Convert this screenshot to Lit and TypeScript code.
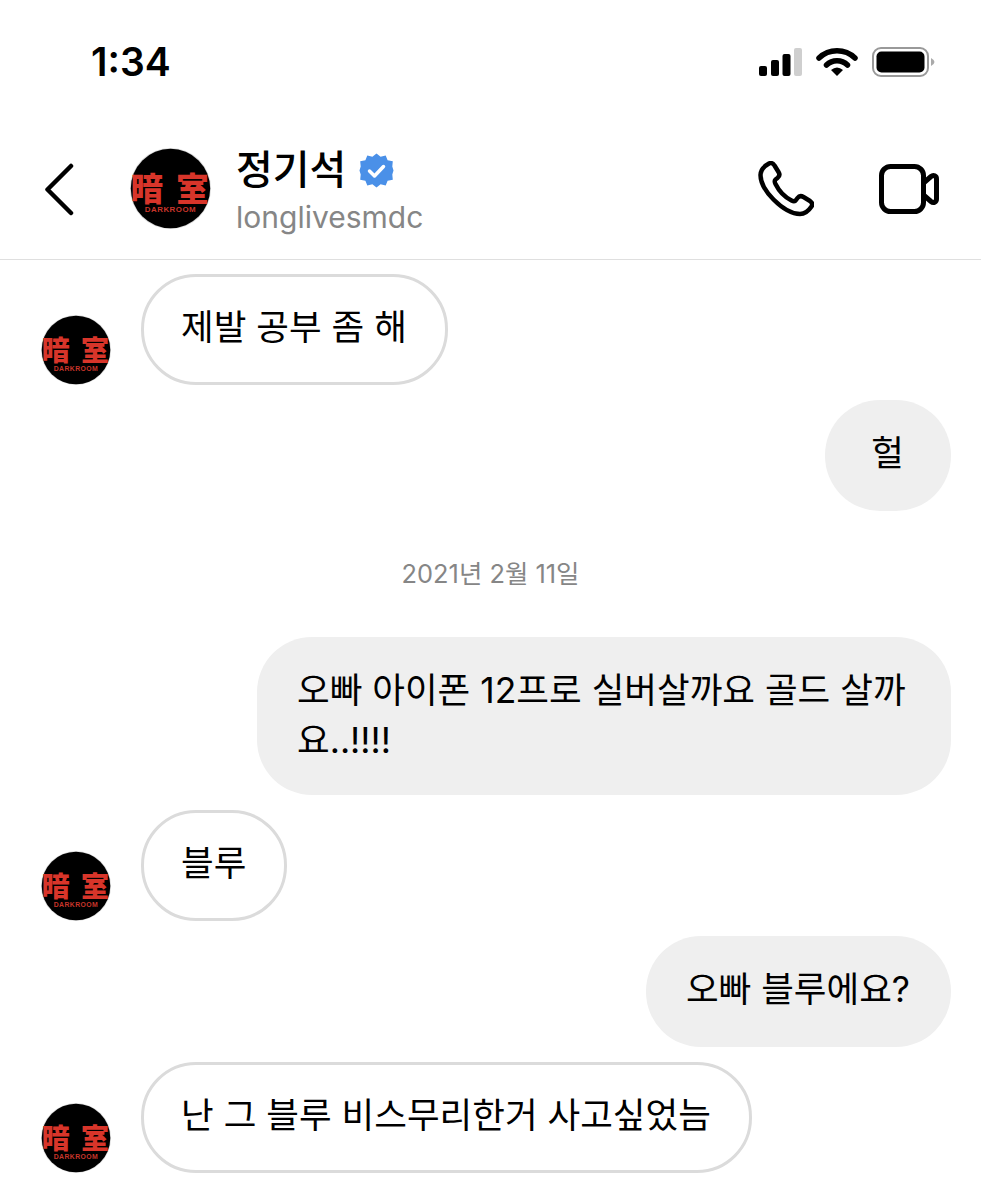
import { LitElement, html, css } from 'lit';
import { customElement, property } from 'lit/decorators.js';

// avatar: black disc with the red "darkroom" mark
@customElement('dm-avatar')
export class DmAvatar extends LitElement {
  @property({ type: Number }) size = 70;

  static styles = css`
    :host {
      display: block;
      flex: none;
    }
    svg {
      display: block;
    }
    .han {
      font-family: "Noto Sans CJK KR", sans-serif;
      font-weight: 900;
      font-size: 40px;
      fill: #d8352a;
    }
    .sub {
      font-family: "Liberation Sans", sans-serif;
      font-weight: 700;
      font-size: 9.8px;
      letter-spacing: 0.6px;
      fill: #c8352a;
    }
  `;

  render() {
    return html`
      <svg width=${this.size} height=${this.size} viewBox="0 0 100 100">
        <circle cx="50" cy="50" r="50" fill="#dbdbdb"></circle>
        <circle cx="50" cy="50" r="49" fill="#000"></circle>
        <text class="han" x="1" y="66">暗</text>
        <text class="han" x="57" y="66">室</text>
        <text class="sub" x="50" y="79.5" text-anchor="middle">DARKROOM</text>
      </svg>
    `;
  }
}

type Msg = { kind: 'in' | 'out' | 'date'; text: string };

const MESSAGES: Msg[] = [
  { kind: 'in', text: '제발 공부 좀 해' },
  { kind: 'out', text: '헐' },
  { kind: 'date', text: '2021년 2월 11일' },
  { kind: 'out', text: '오빠 아이폰 12프로 실버살까요 골드 살까요..!!!!' },
  { kind: 'in', text: '블루' },
  { kind: 'out', text: '오빠 블루에요?' },
  { kind: 'in', text: '난 그 블루 비스무리한거 사고싶었늠' },
];

@customElement('app-root')
export class AppRoot extends LitElement {
  static styles = css`
    :host {
      display: block;
      height: 1200px;
      overflow: hidden;
      background: #fff;
      color: #000;
      font-family: Inter, "Noto Sans CJK KR", sans-serif;
    }

    .status {
      height: 130px;
      box-sizing: border-box;
      padding: 39px 46px 0 91px;
      display: flex;
      justify-content: space-between;
      align-items: flex-start;
    }
    .time {
      font-size: 39px;
      line-height: 46px;
      font-weight: 600;
    }
    .status-icons {
      display: flex;
      align-items: center;
      gap: 14px;
      padding-top: 8px;
    }
    .status-icons svg {
      display: block;
    }

    .header {
      height: 130px;
      box-sizing: border-box;
      border-bottom: 1px solid #dfdfdf;
      display: flex;
      align-items: flex-start;
      padding: 19px 42px 0 43px;
    }
    .back {
      display: block;
      margin: 14px 0 0 0;
      flex: none;
    }
    .header dm-avatar {
      margin: -1px 0 0 55px;
    }
    .who {
      margin-left: 25px;
      flex: 1;
    }
    .name-row {
      display: flex;
      align-items: center;
      gap: 13px;
      height: 42px;
    }
    .name {
      font-size: 40px;
      line-height: 42px;
      font-weight: 500;
    }
    .handle {
      font-size: 30px;
      line-height: 36px;
      margin-top: 8px;
      color: #868686;
    }
    .actions {
      display: flex;
      gap: 65px;
      align-items: center;
      padding-top: 12px;
    }
    .actions svg {
      display: block;
    }

    .thread {
      display: flex;
      flex-direction: column;
      padding: 14px 30px 0 41px;
      gap: 15px;
    }
    .row {
      display: flex;
      align-items: flex-end;
      gap: 30px;
    }
    .row.out {
      justify-content: flex-end;
    }
    .bubble {
      box-sizing: border-box;
      display: flex;
      justify-content: center;
      max-width: 694px;
      min-width: 126px;
      min-height: 111px;
      border-radius: 55px;
      padding: 29px 41px 29px 40px;
      font-size: 35.5px;
      line-height: 50px;
      word-break: break-all;
    }
    .in .bubble {
      border: 3px solid #dbdbdb;
      padding: 26px 38px 26px 37px;
      background: #fff;
    }
    .out .bubble {
      background: #efefef;
    }
    .date {
      height: 96px;
      box-sizing: border-box;
      padding: 32px 11px 0 0;
      text-align: center;
      font-size: 25.4px;
      line-height: 32px;
      color: #868686;
    }
  `;

  renderMessage(m: Msg) {
    if (m.kind === 'date') return html`<div class="date">${m.text}</div>`;
    if (m.kind === 'out') {
      return html`<div class="row out"><div class="bubble">${m.text}</div></div>`;
    }
    return html`
      <div class="row in">
        <dm-avatar size="70"></dm-avatar>
        <div class="bubble">${m.text}</div>
      </div>
    `;
  }

  render() {
    return html`
      <div class="status">
        <div class="time">1:34</div>
        <div class="status-icons">
          <svg width="44" height="30" viewBox="0 0 44 30">
            <rect x="1" y="19" width="8" height="10" rx="2" fill="#000"></rect>
            <rect x="13" y="13" width="8" height="16" rx="2" fill="#000"></rect>
            <rect x="24.5" y="7" width="8" height="22" rx="2" fill="#000"></rect>
            <rect x="36" y="1" width="8" height="28" rx="2" fill="#cfcfcf"></rect>
          </svg>
          <svg width="42" height="30" viewBox="0 0 42 30">
            <path d="M3 11 A26 26 0 0 1 39 11" fill="none" stroke="#000" stroke-width="5.5" stroke-linecap="round"></path>
            <path d="M10.5 18 A15 15 0 0 1 31.5 18" fill="none" stroke="#000" stroke-width="5.5" stroke-linecap="round"></path>
            <path d="M15 23 Q21 18 27 23 L21 29 Z" fill="#000"></path>
          </svg>
          <svg width="63" height="30" viewBox="0 0 63 30">
            <rect x="1" y="1" width="55" height="28" rx="8" fill="none" stroke="#999" stroke-width="2"></rect>
            <rect x="4.5" y="4.5" width="48" height="21" rx="5" fill="#000"></rect>
            <path d="M59 11 Q62.5 13 62.5 15 Q62.5 17 59 19 Z" fill="#aaa"></path>
          </svg>
        </div>
      </div>

      <div class="header">
        <svg class="back" width="32" height="54" viewBox="0 0 32 54">
          <path d="M28 3 L4.5 26.5 L28 50" fill="none" stroke="#000" stroke-width="4.5" stroke-linecap="round" stroke-linejoin="round"></path>
        </svg>
        <dm-avatar size="81"></dm-avatar>
        <div class="who">
          <div class="name-row">
            <span class="name">정기석</span>
            <svg width="35" height="35" viewBox="0 0 35 35">
              <path fill="#4a90e8" d="M17.5 0.5 L21.6 3.8 L26.7 2.4 L28.6 7.3 L33.8 8.3 L33.3 13.5 L34.5 17.5 L33.3 21.5 L33.8 26.7 L28.6 27.7 L26.7 32.6 L21.6 31.2 L17.5 34.5 L13.4 31.2 L8.3 32.6 L6.4 27.7 L1.2 26.7 L1.7 21.5 L0.5 17.5 L1.7 13.5 L1.2 8.3 L6.4 7.3 L8.3 2.4 L13.4 3.8 Z"></path>
              <path d="M10.5 18 L15.5 23 L24.5 13.5" fill="none" stroke="#fff" stroke-width="3.5" stroke-linecap="round" stroke-linejoin="round"></path>
            </svg>
          </div>
          <div class="handle">longlivesmdc</div>
        </div>
        <div class="actions">
          <svg width="56" height="56" viewBox="0 0 56 56">
            <path d="M11 2.5 C13 1.5 15 2.5 16.5 4.5 L20.5 11 C22 13.5 21.5 15.5 19.5 17 L17.5 18.5 C16.5 19.5 16.5 21 17.5 23 C21 30 26.5 36 33.5 39.5 C35.5 40.5 37 40.5 38 39 L39.5 37 C41 35 43 34.5 45.5 36 L52 40 C54 41.5 55 43.5 53.5 45.5 C50.5 50 46.5 53 42 53 C34 53 24 47 15.5 38.5 C7 30 2.5 21.5 2.5 14 C2.5 9.5 6.5 5 11 2.5 Z" fill="none" stroke="#000" stroke-width="4.5" stroke-linejoin="round"></path>
          </svg>
          <svg width="60" height="50" viewBox="0 0 60 50">
            <rect x="2.5" y="2.5" width="42" height="45" rx="9" fill="none" stroke="#000" stroke-width="5"></rect>
            <path d="M44.5 19 L52 12.5 C54.5 10.5 57.5 12 57.5 15 V35 C57.5 38 54.5 39.5 52 37.5 L44.5 31" fill="none" stroke="#000" stroke-width="5" stroke-linejoin="round"></path>
          </svg>
        </div>
      </div>

      <div class="thread">${MESSAGES.map((m) => this.renderMessage(m))}</div>
    `;
  }
}
